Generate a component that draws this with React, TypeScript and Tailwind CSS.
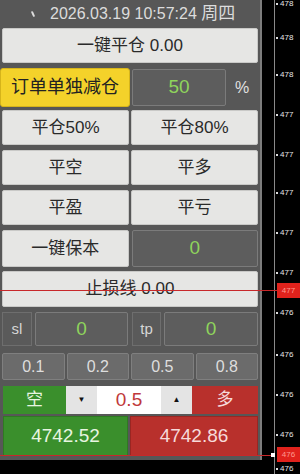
import React from 'react';

const font = { fontFamily: '"Liberation Sans", "Noto Sans CJK SC", sans-serif' };

const LightBtn = ({ children, className = '' }: { children: React.ReactNode, className?: string }) => (
    <div className={`flex items-center justify-center bg-[#e6e6e4] border border-[#c9c9c7] rounded-[2px] text-[#2a2a2a] text-[17px] ${className}`}>
        {children}
    </div>
);

const Field = ({ value, className = '' }: { value: string, className?: string }) => (
    <div className={`flex items-center justify-center bg-[#5d5d5d] border border-[#7b7b7b] rounded-[2px] text-[#8fd45c] text-[19px] ${className}`}>
        {value}
    </div>
);

const ticks = [
    { y: 4, t: '478' }, { y: 38, t: '478' }, { y: 75, t: '478' },
    { y: 115, t: '477' }, { y: 155, t: '477' }, { y: 193, t: '477' }, { y: 233, t: '477' }, { y: 273, t: '477' },
    { y: 313, t: '476' }, { y: 355, t: '476' }, { y: 395, t: '476' }, { y: 435, t: '476' }, { y: 469, t: '476' },
];

export default function App() {
    return (
        <div className="relative w-[300px] h-[474px] bg-black overflow-hidden flex" style={font}>
            <div className="w-[262px] h-[460px] bg-[#575757] border-r-2 border-[#7d7d7d] flex flex-col px-[2px]">
                <div className="h-[27px] flex items-center relative text-[#dcdcdc] text-[16px] pl-[48px]">
                    <span className="absolute left-[30px] top-[11px] w-[2px] h-[6px] bg-[#ddd] rotate-[-25deg] rounded" />
                    <span>2026.03.19 10:57:24 <span className="text-[17px]">周四</span></span>
                </div>
                <LightBtn className="h-[35px] mt-[1px]">一键平仓 0.00</LightBtn>
                <div className="flex h-[39px] mt-[5px] -ml-[2px] items-stretch">
                    <div className="w-[130px] bg-[#f4d22a] border border-[#d6b41a] rounded-[3px] flex items-center justify-center text-[18px] text-[#222]">订单单独减仓</div>
                    <Field value="50" className="w-[94px] ml-[2px] my-[1px]" />
                    <div className="flex-1 flex items-center justify-center text-[#e0e0e0] text-[16px]">%</div>
                </div>
                <div className="grid grid-cols-2 gap-[2px] h-[35px] mt-[3px]">
                    <LightBtn>平仓50%</LightBtn>
                    <LightBtn>平仓80%</LightBtn>
                </div>
                <div className="grid grid-cols-2 gap-[2px] h-[35px] mt-[5px]">
                    <LightBtn>平空</LightBtn>
                    <LightBtn>平多</LightBtn>
                </div>
                <div className="grid grid-cols-2 gap-[2px] h-[35px] mt-[5px]">
                    <LightBtn>平盈</LightBtn>
                    <LightBtn>平亏</LightBtn>
                </div>
                <div className="grid grid-cols-2 gap-[3px] h-[37px] mt-[5px]">
                    <LightBtn>一键保本</LightBtn>
                    <Field value="0" />
                </div>
                <LightBtn className="h-[36px] mt-[4px]">止损线 0.00</LightBtn>
                <div className="flex h-[34px] mt-[5px] gap-[3px]">
                    <div className="w-[30px] bg-[#5a5a5a] border border-[#6e6e6e] flex items-center justify-center text-[#d6d6d6] text-[15px]">sl</div>
                    <Field value="0" className="w-[93px]" />
                    <div className="w-[29px] bg-[#5a5a5a] border border-[#6e6e6e] flex items-center justify-center text-[#d6d6d6] text-[15px] ml-[1px]">tp</div>
                    <Field value="0" className="flex-1" />
                </div>
                <div className="grid grid-cols-4 gap-[2px] h-[27px] mt-[7px]">
                    {['0.1', '0.2', '0.5', '0.8'].map(v => (
                        <div key={v} className="bg-[#6b6b6b] border border-[#7f7f7f] rounded-[2px] flex items-center justify-center text-[#dedede] text-[16px]">{v}</div>
                    ))}
                </div>
                <div className="flex h-[28px] mt-[6px] ml-[1px]">
                    <div className="w-[63px] bg-[#3a8f2c] flex items-center justify-center text-[#e8f5e0] text-[17px]">空</div>
                    <div className="w-[31px] bg-[#e4e4e4] flex items-center justify-center text-[#111] text-[8px]">▼</div>
                    <div className="w-[64px] bg-white flex items-center justify-center text-[#c0383a] text-[19px]">0.5</div>
                    <div className="w-[31px] bg-[#e4e4e4] flex items-center justify-center text-[#111] text-[8px]">▲</div>
                    <div className="flex-1 bg-[#b8302c] flex items-center justify-center text-[#f6dada] text-[17px]">多</div>
                </div>
                <div className="flex h-[40px] mt-[2px] ml-[1px] gap-[2px]">
                    <div className="w-[125px] bg-[#3a8f2c] border border-[#2f7a22] flex items-center justify-center text-[#e8f5e0] text-[19px]">4742.52</div>
                    <div className="flex-1 bg-[#b8302c] border border-[#9a2622] flex items-center justify-center text-[#f6dada] text-[19px]">4742.86</div>
                </div>
            </div>

            {/* price axis */}
            <div className="relative flex-1">
                <div className="absolute left-[12px] top-0 bottom-0 w-px bg-[#8a8a8a]" />
                {ticks.map((k, i) => (
                    <div key={i} className="absolute left-[14px] flex items-center gap-[2px] text-[8px] text-[#e6e6e6] leading-none" style={{ top: k.y - 4 }}>
                        <span className="w-[2px] h-[2px] bg-[#ddd]" />
                        <span>{k.t}</span>
                    </div>
                ))}
            </div>

            {/* stop line overlay */}
            <div className="absolute left-0 top-[290px] w-[277px] h-px bg-[#c8282a]" />
            <div className="absolute left-[277px] top-[283px] w-[23px] h-[15px] bg-[#e0221c] flex items-center justify-center text-[8px] text-[#ff9a90]">477</div>

            {/* price line overlay */}
            <div className="absolute left-0 top-[455px] w-[271px] h-px bg-[#c8282a]" />
            <div className="absolute left-[271px] top-[453px] w-[4px] h-[4px] bg-white" />
            <div className="absolute left-[277px] top-[447px] w-[23px] h-[15px] bg-[#e0221c] flex items-center justify-center text-[8px] text-[#ff9a90]">476</div>
        </div>
    );
}
